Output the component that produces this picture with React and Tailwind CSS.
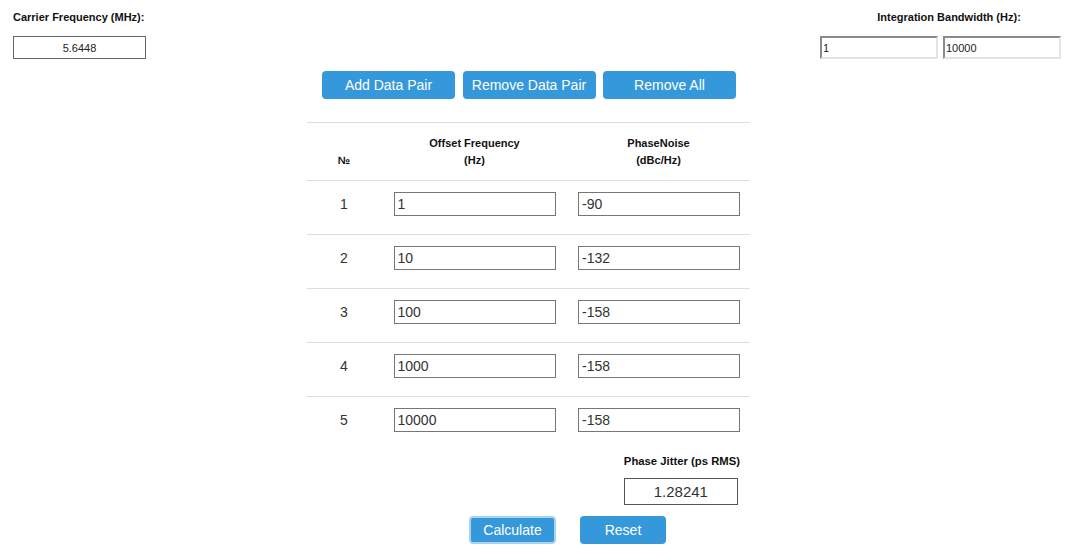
import { useState } from 'react'

const INITIAL = [
  ['1', '-90'],
  ['10', '-132'],
  ['100', '-158'],
  ['1000', '-158'],
  ['10000', '-158'],
]

const btn = 'h-[28px] rounded-[4px] bg-[#3498db] text-white text-[14px] leading-none'

export default function App() {
  const [pairs, setPairs] = useState(INITIAL)
  const [carrier, setCarrier] = useState('5.6448')
  const [bwLow, setBwLow] = useState('1')
  const [bwHigh, setBwHigh] = useState('10000')

  const edit = (i, j, v) =>
    setPairs(p => p.map((row, k) => (k === i ? row.map((c, m) => (m === j ? v : c)) : row)))

  return (
    <div className="w-[1091px] h-[557px] bg-white font-['Liberation_Sans',Arial,sans-serif] text-[#333]">
      {/* top inputs */}
      <div className="flex justify-between pt-[11px] px-[13px]">
        <div className="flex flex-col">
          <label className="text-[11px] leading-[13px] font-bold text-[#111]">Carrier Frequency (MHz):</label>
          <input
            value={carrier}
            onChange={e => setCarrier(e.target.value)}
            className="mt-[12px] w-[133px] h-[23px] border border-[#666] text-center text-[11px] text-[#222] outline-none"
          />
        </div>
        <div className="flex flex-col w-[258px]">
          <label className="text-[11px] leading-[13px] font-bold text-[#111] text-center">Integration Bandwidth (Hz):</label>
          <div className="mt-[12px] flex gap-[5px]">
            <input
              value={bwLow}
              onChange={e => setBwLow(e.target.value)}
              className="w-[118px] h-[23px] border-2 border-t-[#8a8a8a] border-l-[#8a8a8a] border-r-[#e4e4e4] border-b-[#e4e4e4] px-[1px] text-[11px] text-[#222] outline-none"
            />
            <input
              value={bwHigh}
              onChange={e => setBwHigh(e.target.value)}
              className="w-[118px] h-[23px] border-2 border-t-[#8a8a8a] border-l-[#8a8a8a] border-r-[#e4e4e4] border-b-[#e4e4e4] px-[1px] text-[11px] text-[#222] outline-none"
            />
          </div>
        </div>
      </div>

      <div className="ml-[307px] w-[443px]">
        <div className="mt-[12px] flex gap-[7.5px] pl-[15px]">
          <button onClick={() => setPairs(p => [...p, ['', '']])} className={`${btn} w-[133px]`}>Add Data Pair</button>
          <button onClick={() => setPairs(p => p.slice(0, -1))} className={`${btn} w-[133px]`}>Remove Data Pair</button>
          <button onClick={() => setPairs([])} className={`${btn} w-[133px]`}>Remove All</button>
        </div>

        {/* table */}
        <div className="mt-[23px] border-t border-[#dedede]">
          <div className="grid grid-cols-[74px_187px_182px] h-[58px] border-b border-[#dedede] items-end pb-[11px] text-[11px] leading-[17px] font-bold text-[#111] text-center">
            <div>№</div>
            <div>Offset Frequency<br />(Hz)</div>
            <div className="pr-[1px]">PhaseNoise<br />(dBc/Hz)</div>
          </div>
          {pairs.map((row, i) => (
            <div
              key={i}
              className={`grid grid-cols-[74px_187px_182px] h-[54px] pt-[11px] ${i < pairs.length - 1 ? 'border-b border-[#dedede]' : ''}`}
            >
              <div className="h-[24px] flex items-center justify-center text-[14px] text-[#333]">{i + 1}</div>
              <div className="flex justify-center">
                <input
                  value={row[0]}
                  onChange={e => edit(i, 0, e.target.value)}
                  className="w-[162px] h-[24px] border border-[#767676] px-[3px] text-[14px] text-[#333] outline-none"
                />
              </div>
              <div className="flex pl-[10px]">
                <input
                  value={row[1]}
                  onChange={e => edit(i, 1, e.target.value)}
                  className="w-[162px] h-[24px] border border-[#767676] px-[3px] text-[14px] text-[#333] outline-none"
                />
              </div>
            </div>
          ))}
        </div>

        {/* result */}
        <div className="flex justify-end pr-[10px] mt-[4px]">
          <div className="flex flex-col items-start">
            <span className="text-[11.3px] leading-[13px] font-bold text-[#111]">Phase Jitter (ps RMS)</span>
            <input
              readOnly
              value="1.28241"
              className="mt-[10px] w-[114px] h-[27px] border border-[#555] text-center text-[15px] text-[#333] outline-none"
            />
          </div>
        </div>

        <div className="mt-[11px] flex gap-[24px] pl-[162px]">
          <button className={`${btn} w-[87px] border-2 border-[#a9d3f3]`}>Calculate</button>
          <button onClick={() => setPairs(INITIAL)} className={`${btn} w-[86px]`}>Reset</button>
        </div>
      </div>
    </div>
  )
}
